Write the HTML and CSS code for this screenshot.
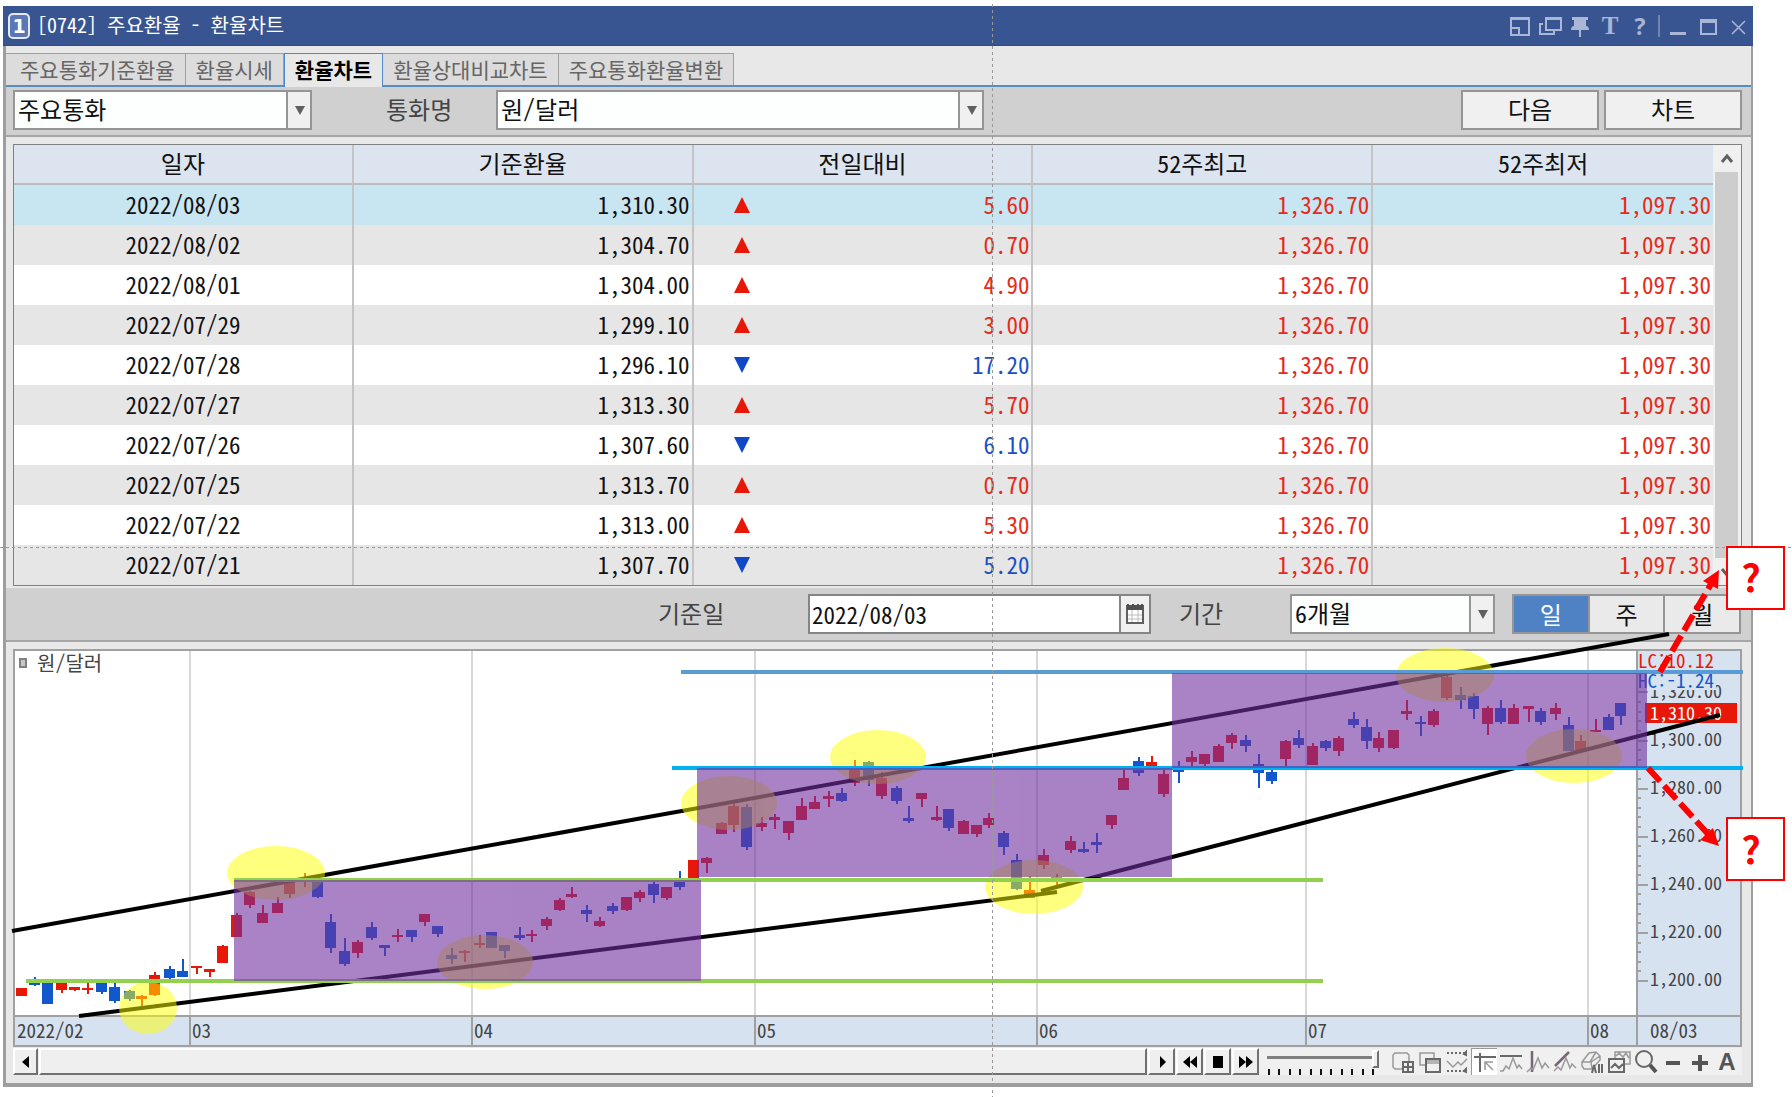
FILE: index.html
```html
<!DOCTYPE html>
<html lang="ko">
<head>
<meta charset="utf-8">
<title>[0742] 주요환율 - 환율차트</title>
<link rel="stylesheet" href="styles.css">
</head>
<body>
<main class="window">
  <header class="titlebar">
    <span class="badge">1</span>
    <h1 class="title">[0742] 주요환율 - 환율차트</h1>
    <div class="window-tools">
      <button class="tool" aria-label="크기"><svg width="24" height="24" viewBox="0 0 24 24"><path d="M3 4h18v17H3zM3 5h18M3 14h8v7" fill="none" stroke="#a9b6d6" stroke-width="2"/></svg></button>
      <button class="tool" aria-label="복제"><svg width="24" height="24" viewBox="0 0 24 24"><path d="M8 4h15v12H8zM8 5h15M5 10H2v10h14v-3" fill="none" stroke="#a9b6d6" stroke-width="2"/></svg></button>
      <button class="tool" aria-label="고정"><svg width="24" height="24" viewBox="0 0 24 24"><path d="M4 3h16v3h-2v6c2 0 3 2 3 4h-8v7h-2v-7H3c0-2 1-4 3-4V6H4z" fill="#a9b6d6"/></svg></button>
      <button class="tool tool-t" aria-label="글꼴">T</button>
      <button class="tool tool-q" aria-label="도움말">?</button>
      <span class="divider"></span>
      <button class="tool" aria-label="최소화"><svg width="24" height="24" viewBox="0 0 24 24"><path d="M4 18h16v3H4z" fill="#a9b6d6"/></svg></button>
      <button class="tool" aria-label="최대화"><svg width="24" height="24" viewBox="0 0 24 24"><path d="M5 6h15v14H5zM5 7h15M5 8h15" fill="none" stroke="#a9b6d6" stroke-width="2"/></svg></button>
      <button class="tool" aria-label="닫기"><svg width="24" height="24" viewBox="0 0 24 24"><path d="M6 7l13 13M19 7L6 20" fill="none" stroke="#a9b6d6" stroke-width="1.5"/></svg></button>
    </div>
  </header>

  <div class="frame">
    <nav class="tabs">
      <a class="tab" href="#t1">주요통화기준환율</a>
      <a class="tab" href="#t2">환율시세</a>
      <a class="tab active" href="#t3">환율차트</a>
      <a class="tab" href="#t4">환율상대비교차트</a>
      <a class="tab" href="#t5">주요통화환율변환</a>
    </nav>

    <div class="toolbar">
      <div class="combo combo-group"><select aria-label="통화 구분"><option>주요통화</option></select></div>
      <label class="label label-currency" for="currency">통화명</label>
      <div class="combo combo-currency"><select id="currency"><option>원/달러</option></select></div>
      <div class="actions">
        <button class="btn">다음</button>
        <button class="btn">차트</button>
      </div>
    </div>

    <section class="grid">
      <div class="rows">
      <table>
        <thead><tr><th>일자</th><th>기준환율</th><th>전일대비</th><th>52주최고</th><th>52주최저</th></tr></thead>
        <tbody>
          <tr class="selected"><td>2022/08/03</td><td>1,310.30</td><td class="up">5.60</td><td>1,326.70</td><td>1,097.30</td></tr>
          <tr><td>2022/08/02</td><td>1,304.70</td><td class="up">0.70</td><td>1,326.70</td><td>1,097.30</td></tr>
          <tr><td>2022/08/01</td><td>1,304.00</td><td class="up">4.90</td><td>1,326.70</td><td>1,097.30</td></tr>
          <tr><td>2022/07/29</td><td>1,299.10</td><td class="up">3.00</td><td>1,326.70</td><td>1,097.30</td></tr>
          <tr><td>2022/07/28</td><td>1,296.10</td><td class="down">17.20</td><td>1,326.70</td><td>1,097.30</td></tr>
          <tr><td>2022/07/27</td><td>1,313.30</td><td class="up">5.70</td><td>1,326.70</td><td>1,097.30</td></tr>
          <tr><td>2022/07/26</td><td>1,307.60</td><td class="down">6.10</td><td>1,326.70</td><td>1,097.30</td></tr>
          <tr><td>2022/07/25</td><td>1,313.70</td><td class="up">0.70</td><td>1,326.70</td><td>1,097.30</td></tr>
          <tr><td>2022/07/22</td><td>1,313.00</td><td class="up">5.30</td><td>1,326.70</td><td>1,097.30</td></tr>
          <tr><td>2022/07/21</td><td>1,307.70</td><td class="down">5.20</td><td>1,326.70</td><td>1,097.30</td></tr>
        </tbody>
      </table>
      </div>
      <div class="scrollbar">
        <button aria-label="위로"><svg width="14" height="10" viewBox="0 0 14 10"><path d="M2 8l5-6 5 6" fill="none" stroke="#606060" stroke-width="3"/></svg></button>
        <div class="thumb"></div>
        <button aria-label="아래로"><svg width="14" height="10" viewBox="0 0 14 10"><path d="M2 2l5 6 5-6" fill="none" stroke="#606060" stroke-width="3"/></svg></button>
      </div>
    </section>

    <div class="toolbar toolbar-period">
      <label class="label label-date" for="base-date">기준일</label>
      <div class="date">
        <input id="base-date" type="text" value="2022/08/03">
        <button aria-label="달력"><svg width="18" height="22" viewBox="0 0 18 22"><path d="M1 3h16v17H1z" fill="#fff" stroke="#606060" stroke-width="2"/><path d="M1 3V1h2v1h3V1h2v1h3V1h2v1h2V1h2v6H1z" fill="#505050"/><path d="M6 7v12M12 7v12M2 12h14M2 16h14" stroke="#bbb" fill="none"/></svg></button>
      </div>
      <label class="label label-period" for="period">기간</label>
      <div class="combo combo-period"><select id="period"><option>6개월</option></select></div>
      <div class="segment">
        <button class="on">일</button><button>주</button><button>월</button>
      </div>
    </div>

    <section class="chart">
      <svg class="plot" viewBox="13 648 1729 398" role="img" aria-label="원/달러 차트">
        <rect x="13" y="648" width="1729" height="398" fill="#fff"/>
        <rect x="1637" y="648" width="105" height="398" fill="#d6e2f0"/>
        <rect x="13" y="1015" width="1729" height="31" fill="#d6e2f0"/>
        <path class="gridline" d="M190 649V1015M472 649V1015M755 649V1015M1037 649V1015M1306 649V1015M1588 649V1015"/>
        <path class="axis" d="M13 1015H1742M1637 648V1045M190 1015v30M472 1015v30M755 1015v30M1037 1015v30M1306 1015v30M1588 1015v30"/>
        <path class="axis" id="ticks"/>
        <rect class="axis" x="14" y="649" width="1727" height="396"/>
        <rect x="20" y="658" width="6" height="8" fill="#c8c8c8" stroke="#808080" stroke-width="2"/>
        <text class="name" x="37" y="670">원/달러</text>
        <g class="months">
          <text x="17" y="1037">2022/02</text><text x="192" y="1037">03</text><text x="474" y="1037">04</text><text x="757" y="1037">05</text><text x="1039" y="1037">06</text><text x="1308" y="1037">07</text><text x="1590" y="1037">08</text><text x="1650" y="1037">08/03</text>
        </g>
        <g class="prices">
          <text x="1650" y="697">1,320.00</text><text x="1650" y="745">1,300.00</text><text x="1650" y="793">1,280.00</text><text x="1650" y="841">1,260.00</text><text x="1650" y="889">1,240.00</text><text x="1650" y="937">1,220.00</text><text x="1650" y="985">1,200.00</text>
        </g>
        <rect x="1639" y="674" width="77" height="15" fill="#d6e2f0"/>
        <text class="low" x="1638" y="667">LC:10.12</text>
        <text class="high" x="1638" y="687">HC:-1.24</text>
        <rect x="1645" y="702" width="92" height="20" fill="#e81808"/>
        <text class="last" x="1650" y="719">1,310.30</text>
        <path id="rise" fill="#e81808"/>
        <path id="fall" fill="#1058cc"/>

        <g class="trend"><path d="M12 930L1669 633"/><path d="M79 1015L1057 891"/><path d="M1041 890L1720 714"/></g>
        <g class="turn">
          <ellipse cx="148" cy="1007" rx="29" ry="26"/><ellipse cx="276" cy="872" rx="49" ry="27"/><ellipse cx="485" cy="961" rx="48" ry="27"/><ellipse cx="729" cy="802" rx="48" ry="27"/><ellipse cx="878" cy="756" rx="48" ry="27"/><ellipse cx="1034" cy="886" rx="49" ry="27"/><ellipse cx="1445" cy="674" rx="49" ry="27"/><ellipse cx="1574" cy="755" rx="48" ry="27"/>
        </g>
        <g class="level"><path stroke="#92d050" d="M234 879H1323M26 980H1323"/><path stroke="#5b9bd5" d="M681 671H1743"/><path stroke="#00b0f0" d="M672 767H1743"/></g>
        <g class="box"><rect x="234" y="879" width="467" height="101"/><rect x="697" y="767" width="475" height="109"/><rect x="1172" y="672" width="475" height="95"/></g>
        <path class="guide" d="M992 3V1097M0 546H1792"/>
        <g class="arrow">
          <path d="M1660 671L1711 583M1648 767L1708 833"/>
          <polygon points="1719,569 1703,580 1718,588"/><polygon points="1719,845 1713,827 1700,839"/>
        </g>
        <g class="question">
          <rect x="1727" y="546" width="57" height="62"/><text x="1751" y="591">?</text>
          <rect x="1727" y="817" width="57" height="62"/><text x="1751" y="863">?</text>
        </g>
      </svg>
    </section>

    <footer class="chartbar">
      <button class="raised raised-left" aria-label="왼쪽"><svg width="12" height="14" viewBox="0 0 12 14"><path d="M9 1v12L2 7z"/></svg></button>
      <div class="track"></div>
      <button class="raised" aria-label="재생"><svg width="14" height="14" viewBox="0 0 14 14"><path d="M5 1v12l6-6z"/></svg></button>
      <button class="raised" aria-label="뒤로"><svg width="14" height="14" viewBox="0 0 14 14"><path d="M7 1v12L0 7zM14 1v12L7 7z"/></svg></button>
      <button class="raised" aria-label="정지"><svg width="14" height="14" viewBox="0 0 14 14"><path d="M2 1h10v12H2z"/></svg></button>
      <button class="raised" aria-label="앞으로"><svg width="14" height="14" viewBox="0 0 14 14"><path d="M0 1v12l7-6zM7 1v12l7-6z"/></svg></button>
      <div class="slider">
        <input type="range" min="0" max="10" value="10" aria-label="속도">
        <svg width="108" height="6" viewBox="0 0 108 6"><path d="M2 0v6M12 0v6M23 0v6M33 0v6M44 0v6M54 0v6M64 0v6M75 0v6M85 0v6M96 0v6M106 0v6" stroke="#111" stroke-width="2"/></svg>
      </div>
      <div class="icons">
        <button aria-label="추가"><svg viewBox="0 0 24 24"><path d="M12 19H4l-2-2V5l2-2h12l2 2v7"/><path class="d" d="M12 12h10v10H12zM17 12v10M12 17h10"/></svg></button>
        <button aria-label="겹치기"><svg viewBox="0 0 24 24"><path d="M8 15H2V3h14v5"/><path class="d" d="M8 9h14v13H8z"/><path d="M9 10h12v4H9z" fill="#b4b4b4" stroke="none"/></svg></button>
        <button aria-label="범위"><svg viewBox="0 0 24 24"><path class="d" d="M2 3h18M2 21h18" stroke-dasharray="2 2"/><path class="d" d="M21 2v3l-2-1zM21 19v3l-2-1z"/><path d="M2 11l6 6 5-5 3 3 6-6"/></svg></button>
        <button class="pressed" aria-label="선택"><svg viewBox="0 0 24 24"><path class="d" d="M1 7h22M7 3v19"/><path d="M12 20v-8h8M12 12l8 8"/></svg></button>
        <button aria-label="수평선"><svg viewBox="0 0 24 24"><path class="d" d="M1 6h22"/><path d="M1 21h3l3-5 3 3 4-11 4 10 2-3 3 4"/></svg></button>
        <button aria-label="수직선"><svg viewBox="0 0 24 24"><path class="p" d="M6 1v21"/><path d="M1 22l4-4 2 2 5-12 4 10 3-5 4 5"/></svg></button>
        <button aria-label="추세선"><svg viewBox="0 0 24 24"><path class="p" d="M2 16L16 2"/><path d="M1 21l4-4 3 3 5-12 4 10 2-4 4 4"/></svg></button>
        <button aria-label="전체 지우기"><svg viewBox="0 0 24 24"><path d="M2 12l7-9 7-1 4 4v4l-8 9H4l-2-3zM2 12h9l9-6M11 12l1 7M16 2l-6 10"/><path class="d" d="M12 23l2-8 2 8M19 14v9M22 14v9"/></svg></button>
        <button aria-label="차트 겹침"><svg viewBox="0 0 24 24"><path d="M8 8V2h15v12h-5M9 6l3-3 4 4 3-4 3 5"/><path class="d" d="M2 9h15v13H2zM4 18l4-4 4 4 4-4"/></svg></button>
        <button aria-label="확대경"><svg viewBox="0 0 24 24"><circle class="d" cx="10" cy="9" r="8"/><path class="b" d="M16 15l6 7"/></svg></button>
        <button aria-label="축소"><svg viewBox="0 0 24 24"><path class="b" d="M5 13h14"/></svg></button>
        <button aria-label="확대"><svg viewBox="0 0 24 24"><path class="b" d="M4 13h16M12 5v16"/></svg></button>
        <button class="auto">A</button>
      </div>
    </footer>
  </div>
</main>
<script src="chart.js"></script>
</body>
</html>
```
FILE: styles.css
```css
* { box-sizing: border-box; }
body {
  margin: 0;
  background: #fff;
  color: #111;
  font: 23px/28px "Noto Sans Mono CJK KR", "Noto Sans CJK KR", sans-serif;
  overflow-x: hidden;
}
button, input, select { font: inherit; color: inherit; margin: 0; padding: 0; border: 0; border-radius: 0; background: none; }
button { display: flex; align-items: center; justify-content: center; }

.window { margin: 6px 39px 12px 3px; }
.titlebar { display: flex; align-items: center; height: 40px; padding: 0 3px 0 5px; background: #395591; border-bottom: 1px solid #2c4a8c; color: #fff; }
.badge { display: flex; align-items: center; justify-content: center; width: 22px; height: 26px; border: 2px solid #e4e9f5; border-radius: 5px; background: #5b77b5; font: bold 19px/20px "DejaVu Sans", sans-serif; }
.title { margin: 0 auto 2px 7px; font-size: 20px; font-weight: 400; line-height: 24px; }
.window-tools { display: flex; align-items: center; gap: 6px; }
.tool { width: 24px; height: 24px; color: #a9b6d6; }
.tool-t { font: bold 25px/24px "Liberation Serif", serif; }
.tool-q { font: bold 23px/24px "Open Sans", sans-serif; }
.divider { width: 2px; height: 22px; background: #7184ae; }

.frame { padding: 7px 0 8px; background: #e8e8e8; border: solid #9e9e9e; border-width: 0 2px 4px 3px; }
.tabs { display: flex; height: 34px; border-bottom: 2px solid #5a8cc4; font-size: 21px; }
.tab { display: flex; align-items: center; justify-content: center; padding: 0 10px 2px; border: 1px solid #a0a0a0; border-width: 1px 1px 0 0; background: #dcdcdc; color: #666; text-decoration: none; line-height: 24px; }
.tab:first-child { padding-left: 14px; }
.tab.active { height: 34px; padding-bottom: 4px; background: #e8e8e8; color: #000; font-weight: 700; border: 1px solid #4f87c7; border-bottom: 0; }

.toolbar { display: flex; height: 50px; padding: 3px 9px 0 7px; background: #d0d0d0; border-bottom: 2px solid #a6a6a6; font-size: 24px; }
.toolbar-period { justify-content: flex-end; height: 54px; margin: 2px 0 7px; padding: 6px 10px 0 7px; }
.combo { position: relative; height: 40px; border: 2px solid #959595; background: #fdfefe; }
.combo select { appearance: none; display: block; width: 100%; height: 100%; padding: 0 28px 2px 3px; }
.combo::before { content: ""; position: absolute; top: 0; right: 0; bottom: 0; width: 22px; border-left: 2px solid #959595; background: #f0f0f0; pointer-events: none; }
.combo::after { content: ""; position: absolute; top: 14px; right: 5px; border: solid transparent; border-top-color: #606060; border-width: 9px 5px 0; pointer-events: none; }
.combo-group { width: 299px; }
.combo-currency { width: 488px; }
.combo-period { width: 205px; }
.label { line-height: 37px; color: #444; }
.label-currency { width: 184px; padding-left: 74px; }
.label-date { width: 150px; }
.label-period { width: 139px; padding-left: 28px; }
.actions { display: flex; gap: 5px; margin-left: auto; }
.btn { width: 138px; height: 40px; padding-bottom: 2px; border: 2px solid #959595; background: #f0f0f0; }
.date { display: flex; width: 343px; height: 40px; border: 2px solid #858585; background: #fff; font-size: 23px; }
.date input { flex: 1; min-width: 0; padding-left: 2px; }
.date button { width: 30px; border-left: 2px solid #858585; background: #f0f0f0; }
.segment { display: flex; width: 229px; height: 40px; margin-left: 17px; border: 2px solid #959595; background: #eaeaea; }
.segment button { flex: 1; border-left: 2px solid #959595; }
.segment button:first-child { border-left: 0; }
.segment .on { background: #4f82c4; color: #fff; }

.grid { display: flex; margin: 7px 9px 0 7px; border: 1px solid #808080; }
.rows { flex: 1; }
table { width: 100%; border-collapse: separate; border-spacing: 0; table-layout: fixed; background: #fff; }
th, td { height: 40px; padding: 0 2px 3px; text-align: right; font-weight: 400; border-right: 2px solid #c4c4c4; }
th:last-child, td:last-child { border-right: 0; }
th { background: #dce4ef; border-bottom: 2px solid #bcbcbc; text-align: center; font-size: 24px; }
tbody tr:nth-child(even) { background: #e6e6e6; }
tbody tr.selected { background: #c8e6f1; }
td:first-child { text-align: center; }
td:nth-child(n+4), .up { color: #e82818; }
.down { color: #1850c8; }
.up::before, .down::before { content: ""; float: left; margin: 7px 0 0 38px; border: solid transparent; border-width: 0 8px 16px; border-bottom-color: #e81808; }
.down::before { border-width: 16px 8px 0; border-top-color: #1048c8; }
.scrollbar { display: flex; flex-direction: column; width: 28px; padding: 0 3px 0 2px; background: #f0f0f0; }
.scrollbar button { height: 27px; }
.thumb { flex: 1; background: #cdcdcd; }

.chart { position: relative; z-index: 1; margin: 0 9px 0 7px; }
.plot { display: block; width: 100%; overflow: visible; pointer-events: none; }
.plot text { font-size: 19px; fill: #444; }
.plot text.name { font-size: 20px; }
.plot .prices text, .plot text.last { font-size: 18px; }
.plot text.last { fill: #fff; }
.plot text.low { fill: #e81808; }
.plot text.high { fill: #1058cc; }
.gridline { stroke: #d8d8d8; stroke-width: 2; }
.axis { fill: none; stroke: #a0a0a0; stroke-width: 2; }
.trend { stroke: #000; stroke-width: 4; }
.turn { fill: #ff0; opacity: 0.5; }
.level { stroke-width: 4; }
.box { fill: #7030a0; opacity: 0.6; }
.guide { stroke: #999; stroke-width: 1; stroke-dasharray: 3 3; shape-rendering: crispEdges; }
.arrow { fill: #f00; }
.arrow path { stroke: #f00; stroke-width: 6; stroke-dasharray: 18 6; }
.question rect { fill: #fff; stroke: #f00; stroke-width: 2; }
.plot .question text { fill: #f00; font: bold 38px "Noto Sans CJK KR", sans-serif; text-anchor: middle; }

.chartbar { display: flex; height: 27px; margin: 1px 9px 0 7px; padding-right: 2px; background: #f0f0f0; }
.raised, .track { border: 2px solid; border-color: #fff #707070 #707070 #fff; background: #efefef; }
.raised { width: 27px; margin-left: 1px; }
.raised-left { width: 25px; margin: 0 1px 0 0; }
.track { flex: 1; }
.slider { display: flex; flex-direction: column; width: 112px; margin-left: 8px; padding-top: 1px; }
.slider input { appearance: none; height: 20px; background: linear-gradient(#808080, #808080) 0 7px / 100% 3px no-repeat; }
.slider input::-webkit-slider-thumb { appearance: none; width: 7px; height: 18px; border: 2px solid; border-color: #fff #707070 #707070 #fff; background: #efefef; }
.icons { display: flex; gap: 1px; margin-left: 11px; }
.icons button { width: 26px; }
.icons svg { width: 24px; height: 24px; fill: none; stroke: #999; stroke-width: 1.5; }
.icons .d { stroke: #686868; stroke-width: 2; }
.icons .p { stroke: #7a6478; stroke-width: 2.5; }
.icons .b { stroke: #555; stroke-width: 4; }
.icons .pressed { background: #fff; border: 1px solid #999; border-width: 1px 0 0 1px; }
.icons .auto { font: bold 24px/24px "Liberation Sans", sans-serif; color: #555; }
```
FILE: chart.js
```js
// Each candle: centre x, high, body top, body bottom, low. Sign of x: positive rises, negative falls.
const candles = [
  [21,987,987,995,995],[-34,976,978,984,985],[-47,978,980,1003,1003],[61,980,980,989,992],[74,986,986,989,990],
  [87,978,987,989,993],[-101,981,981,991,993],[-114,981,986,1000,1002],[-129,989,990,998,1000],[141,994,995,998,1005],
  [154,971,974,994,995],[-169,965,968,977,978],[-182,958,970,976,976],[196,965,965,967,973],[209,968,968,971,976],
  [222,944,945,962,962],[236,912,914,936,936],[249,890,891,904,907],[262,904,912,922,922],[277,896,902,912,912],
  [289,881,881,893,897],[304,872,877,880,886],[-317,880,880,896,897],[-330,913,921,947,952],[-344,937,950,963,965],
  [357,939,941,952,957],[-371,921,926,937,939],[-384,944,944,947,955],[397,928,934,936,941],[-411,929,929,936,941],
  [424,913,913,921,925],[-437,925,925,933,936],[-451,947,954,958,963],[464,949,950,952,961],[479,934,942,944,947],
  [-491,931,931,947,947],[-504,944,944,950,957],[-519,926,934,937,939],[531,929,933,935,941],[546,916,918,925,929],
  [559,897,899,909,910],[571,886,893,896,897],[-586,904,909,913,921],[599,916,920,925,926],[-612,902,905,910,913],
  [626,896,896,909,910],[639,889,891,897,901],[-653,881,883,894,902],[666,886,886,897,899],[-679,870,879,886,889],
  [693,859,859,877,877],[706,856,857,862,872],[721,821,822,833,833],[733,802,805,824,831],[-746,803,806,846,849],
  [761,816,822,826,830],[774,813,816,819,828],[788,820,820,832,839],[801,797,805,819,819],[814,795,801,808,808],
  [828,790,795,798,806],[-841,787,792,800,801],[854,759,767,782,785],[-868,760,761,779,785],[881,771,777,795,798],
  [-896,785,787,800,803],[-908,805,817,820,822],[921,792,792,798,806],[936,805,816,819,820],[-948,808,808,827,830],
  [963,819,820,833,833],[976,824,824,833,836],[988,812,817,824,827],[-1003,830,832,846,854],[-1016,853,859,888,889],
  [1029,875,889,897,897],[1043,848,854,864,868],[1056,873,876,878,886],[1070,835,840,849,852],[-1083,841,848,851,852],
  [-1096,832,841,844,852],[1111,814,814,824,828],[1123,769,777,789,789],[-1138,756,760,772,775],[1151,755,761,765,765],
  [1163,769,773,793,796],[-1178,760,768,771,782],[1191,750,756,761,769],[1204,753,753,763,768],[1218,743,745,761,761],
  [1231,732,734,742,748],[-1245,734,739,745,751],[-1258,753,763,772,787],[-1271,769,771,780,783],[1285,739,740,758,765],
  [-1298,729,737,744,747],[1312,742,745,764,764],[-1325,739,740,747,750],[1338,735,737,750,755],[-1353,711,718,724,727],
  [-1366,718,726,740,748],[1378,731,737,747,751],[1393,729,729,747,748],[1406,699,710,713,719],[-1420,715,721,723,735],
  [1433,708,710,724,726],[1446,674,676,697,699],[-1460,686,694,699,708],[-1473,692,695,708,718],[1487,705,707,723,734],
  [-1500,699,707,721,723],[1513,703,707,723,723],[1528,705,705,708,721],[-1540,707,710,721,724],[1555,702,707,713,719],
  [-1568,716,724,750,750],[1580,734,740,750,750],[1595,718,729,731,731],[-1608,713,716,729,729],[-1620,702,702,715,724]
];
const shape = ([x, high, top, bottom, low]) => {
  const c = Math.abs(x);
  return `M${c - 5} ${top}h11V${bottom}h-11zM${c} ${high}h2V${top}h-2zM${c} ${bottom}h2V${low}h-2z`;
};
document.getElementById('rise').setAttribute('d', candles.filter(c => c[0] > 0).map(shape).join(''));
document.getElementById('fall').setAttribute('d', candles.filter(c => c[0] < 0).map(shape).join(''));

// Price scale: 20 won between long marks, five steps each.
let ticks = '';
for (let i = 0; i <= 30; i++) {
  const y = Math.round(980 - i * 48.1 / 5);
  ticks += `M1637 ${y}h${i % 5 === 0 ? 11 : 4}`;
}
document.getElementById('ticks').setAttribute('d', ticks);
```
